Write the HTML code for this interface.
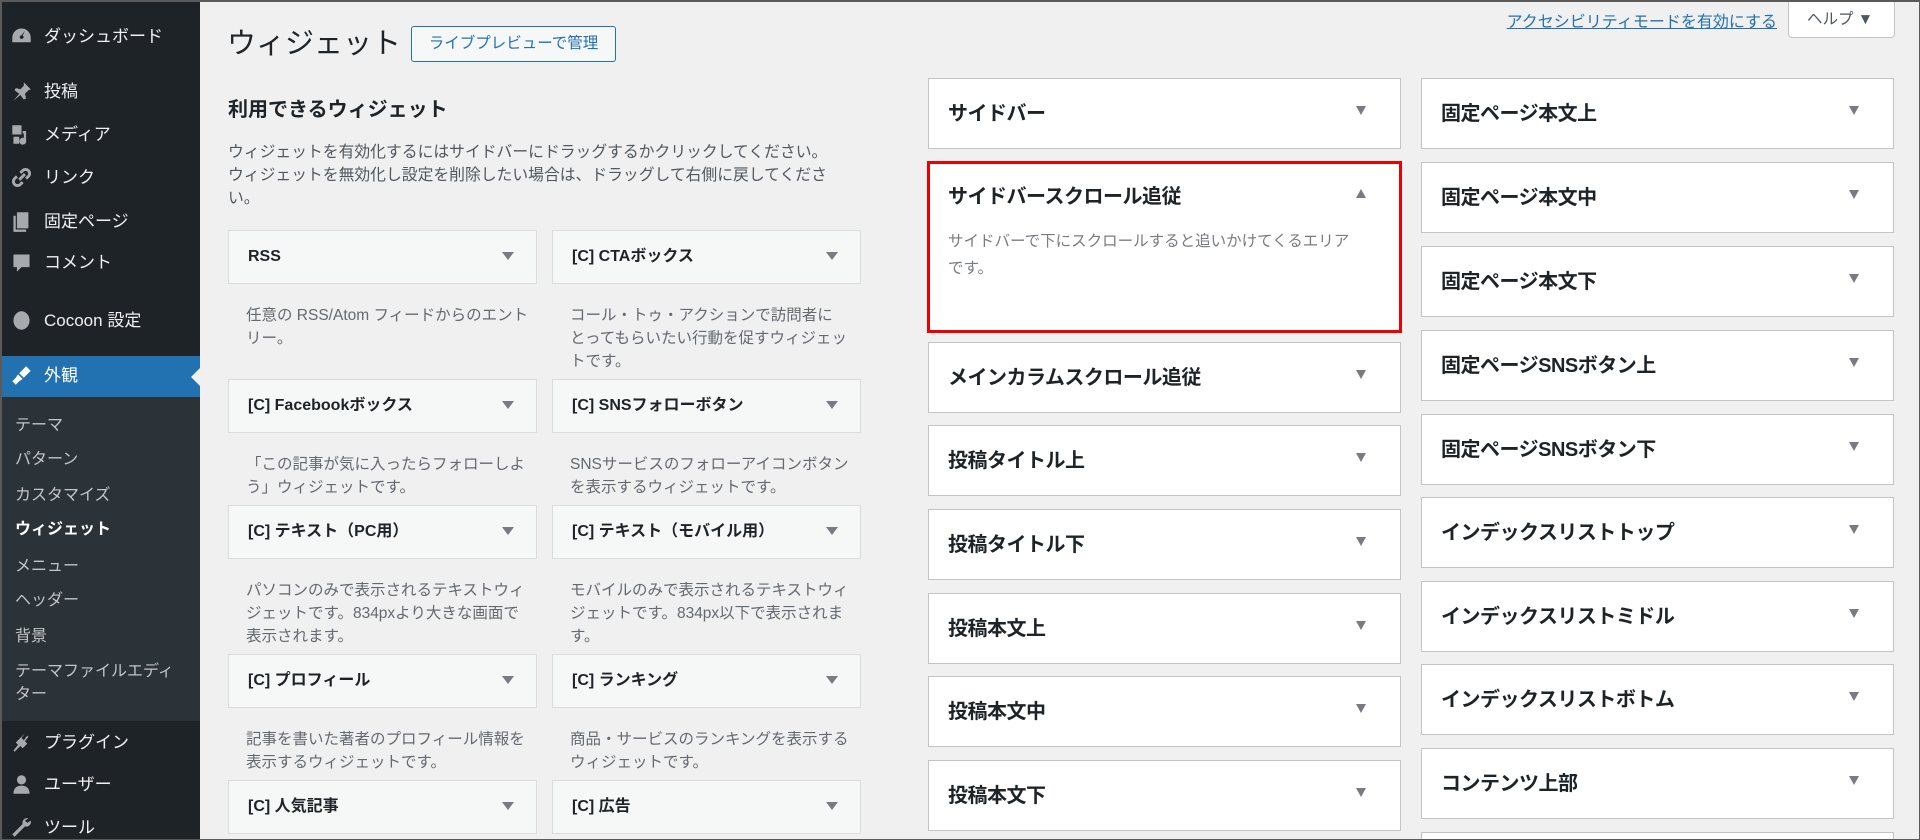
<!DOCTYPE html>
<html style="width:1920px;height:840px;overflow:hidden"><head><meta charset="utf-8"><style>
*{margin:0;padding:0;box-sizing:border-box}
body{width:1920px;height:840px;overflow:hidden;background:#f0f0f1;font-family:"Liberation Sans","Noto Sans CJK JP",sans-serif;position:relative;color:#1d2327}
.frame{position:absolute;left:0;top:0;width:1920px;height:840px;border:2px solid #5a5a5a;border-right-width:1px;border-bottom-width:1px;pointer-events:none;z-index:10}
#side{position:absolute;left:0;top:0;width:200px;height:840px;background:#1d2327}
#sub{position:absolute;left:0;top:397px;width:200px;height:324px;background:#2c3338}
#act{position:absolute;left:0;top:356px;width:200px;height:41px;background:#2271b1}
#act:after{content:"";position:absolute;right:0;top:12px;border:9px solid transparent;border-right-color:#f0f0f1}
.mi{position:absolute;left:44px;font-size:17px;color:#f0f0f1;line-height:20px}
.ic{position:absolute;left:10px;width:23px;height:23px;color:#a7aaad;margin-top:-2px}
.si{position:absolute;left:15px;font-size:16px;color:#c3c4c7;line-height:22px}
.abs{position:absolute}
.wc{position:absolute;width:309px;height:54px;background:#f6f7f7;border:1px solid #dcdcde}
.wc b{position:absolute;left:19px;top:17px;font-size:16px;line-height:18px;height:18px;font-weight:bold;color:#1d2327;white-space:nowrap}
.wc i{position:absolute;right:22px;top:21px;border:6px solid transparent;border-top:8px solid #787c82;border-bottom:0}
.wd{position:absolute;white-space:nowrap;font-size:15.5px;line-height:23px;color:#646970}
.sc{position:absolute;width:473px;height:71px;background:#fff;border:1px solid #c3c4c7;overflow:hidden}
.sc b{position:absolute;left:19px;top:24px;font-size:20px;line-height:22px;font-weight:bold;color:#1d2327;letter-spacing:-0.5px;white-space:nowrap}
.sc i{position:absolute;right:34px;top:27px;border:5px solid transparent;border-top:9px solid #787c82;border-bottom:0}
</style></head><body>
<div id="side"></div><div id="sub"></div><div id="act"></div>
<svg class="ic" style="top:27px" viewBox="0 0 20 20"><path fill="currentColor" d="M10 3a8 8 0 0 0-8 8v4h16v-4a8 8 0 0 0-8-8zm0 9a1.5 1.5 0 1 1 0-3l3-4-2 4.2a1.5 1.5 0 0 1-1 2.8z"/></svg>
<div class="mi" style="top:27px">ダッシュボード</div>
<svg class="ic" style="top:82px" viewBox="0 0 20 20"><path fill="currentColor" d="M12 2l6 6-2 1-3 3 1 4-2 1-3-4-6 5 5-6-4-3 1-2 4 1 3-3z"/></svg>
<div class="mi" style="top:82px">投稿</div>
<svg class="ic" style="top:125px" viewBox="0 0 20 20"><path fill="currentColor" d="M2 2h8v8H2zM11 7h3v8a3 3 0 1 1-2-2V9h-1zM3 12h5v6H3z"/></svg>
<div class="mi" style="top:125px">メディア</div>
<svg class="ic" style="top:168px" viewBox="0 0 20 20"><path fill="none" stroke="currentColor" stroke-width="2.5" d="M8 12l5-5M6 9l-2 2a3 3 0 0 0 5 5l2-2M14 11l2-2a3 3 0 0 0-5-5l-2 2"/></svg>
<div class="mi" style="top:168px">リンク</div>
<svg class="ic" style="top:212px" viewBox="0 0 20 20"><path fill="currentColor" d="M6 2h10v14H6zM3 5h2v12h9v2H3z"/></svg>
<div class="mi" style="top:212px">固定ページ</div>
<svg class="ic" style="top:253px" viewBox="0 0 20 20"><path fill="currentColor" d="M3 3h14v11h-7l-4 4v-4H3z"/></svg>
<div class="mi" style="top:253px">コメント</div>
<svg class="ic" style="top:311px" viewBox="0 0 20 20"><ellipse cx="10" cy="10" rx="7" ry="8" fill="currentColor"/></svg>
<div class="mi" style="top:311px">Cocoon 設定</div>
<svg class="ic" style="top:366px;color:#fff" viewBox="0 0 20 20"><path fill="currentColor" d="M14 2l4 4-6 6-4-4zM7 9l4 4-3 2-3 3-3-3 3-3z"/></svg>
<div class="mi" style="top:366px;color:#fff">外観</div>
<div class="si" style="top:415px">テーマ</div>
<div class="si" style="top:449px">パターン</div>
<div class="si" style="top:485px">カスタマイズ</div>
<div class="si" style="top:519px;color:#fff;font-weight:bold">ウィジェット</div>
<div class="si" style="top:556px">メニュー</div>
<div class="si" style="top:590px">ヘッダー</div>
<div class="si" style="top:626px">背景</div>
<div class="si" style="top:660px;width:170px;line-height:23px">テーマファイルエディター</div>
<svg class="ic" style="top:733px" viewBox="0 0 20 20"><path fill="currentColor" d="M13 2l-3 4 2 2 3-4 1 1-3 4 2 2-4 4-2-2-5 5-1-1 4-5-2-2z"/></svg>
<div class="mi" style="top:733px">プラグイン</div>
<svg class="ic" style="top:775px" viewBox="0 0 20 20"><circle cx="10" cy="6" r="4" fill="currentColor"/><path fill="currentColor" d="M3 18c0-5 3-7 7-7s7 2 7 7z"/></svg>
<div class="mi" style="top:775px">ユーザー</div>
<svg class="ic" style="top:818px" viewBox="0 0 20 20"><path fill="currentColor" d="M16 2a4 4 0 0 0-5 5L2 16l2 2 9-9a4 4 0 0 0 5-5l-3 2-2-2z"/></svg>
<div class="mi" style="top:818px">ツール</div>

<div class="abs" style="left:227px;top:25px;font-size:29px;color:#1d2327;line-height:38px">ウィジェット</div>
<div class="abs" style="left:411px;top:26px;width:205px;height:36px;border:1px solid #2271b1;border-radius:3px;color:#2271b1;font-size:15.5px;line-height:34px;text-align:center;background:#f6f7f7">ライブプレビューで管理</div>
<div class="abs" style="left:1777px;top:8px;transform:translateX(-100%);white-space:nowrap;font-size:16px;color:#2271b1;text-decoration:underline">アクセシビリティモードを有効にする</div>
<div class="abs" style="left:1788px;top:0;width:107px;height:38px;background:#fff;border:1px solid #c3c4c7;border-top:0;border-radius:0 0 4px 4px;font-size:15.5px;line-height:40px;padding-left:18px;color:#50575e">ヘルプ ▼</div>

<div class="abs" style="left:228px;top:97px;font-size:20px;font-weight:bold;line-height:26px">利用できるウィジェット</div>
<div class="abs" style="left:228px;top:141px;width:606px;font-size:15.8px;line-height:23px;color:#50575e">ウィジェットを有効化するにはサイドバーにドラッグするかクリックしてください。ウィジェットを無効化し設定を削除したい場合は、ドラッグして右側に戻してください。</div>

<div class="wc" style="left:228px;top:230px"><b>RSS</b><i></i></div>
<div class="wc" style="left:552px;top:230px"><b>[C] CTAボックス</b><i></i></div>
<div class="wd" style="left:246px;top:304px">任意の RSS/Atom フィードからのエント<br>リー。</div>
<div class="wd" style="left:570px;top:304px">コール・トゥ・アクションで訪問者に<br>とってもらいたい行動を促すウィジェッ<br>トです。</div>
<div class="wc" style="left:228px;top:379px"><b>[C] Facebookボックス</b><i></i></div>
<div class="wc" style="left:552px;top:379px"><b>[C] SNSフォローボタン</b><i></i></div>
<div class="wd" style="left:246px;top:453px">「この記事が気に入ったらフォローしよ<br>う」ウィジェットです。</div>
<div class="wd" style="left:570px;top:453px">SNSサービスのフォローアイコンボタン<br>を表示するウィジェットです。</div>
<div class="wc" style="left:228px;top:505px"><b>[C] テキスト（PC用）</b><i></i></div>
<div class="wc" style="left:552px;top:505px"><b>[C] テキスト（モバイル用）</b><i></i></div>
<div class="wd" style="left:246px;top:579px">パソコンのみで表示されるテキストウィ<br>ジェットです。834pxより大きな画面で<br>表示されます。</div>
<div class="wd" style="left:570px;top:579px">モバイルのみで表示されるテキストウィ<br>ジェットです。834px以下で表示されま<br>す。</div>
<div class="wc" style="left:228px;top:654px"><b>[C] プロフィール</b><i></i></div>
<div class="wc" style="left:552px;top:654px"><b>[C] ランキング</b><i></i></div>
<div class="wd" style="left:246px;top:728px">記事を書いた著者のプロフィール情報を<br>表示するウィジェットです。</div>
<div class="wd" style="left:570px;top:728px">商品・サービスのランキングを表示する<br>ウィジェットです。</div>
<div class="wc" style="left:228px;top:780px"><b>[C] 人気記事</b><i></i></div>
<div class="wc" style="left:552px;top:780px"><b>[C] 広告</b><i></i></div>

<div class="sc" style="left:928px;top:78px"><b>サイドバー</b><i></i></div>
<div class="sc" style="left:927px;top:161px;width:475px;height:172px;border:3px solid #e00"><b style="left:18px;top:22px">サイドバースクロール追従</b><i style="border-top:0;border-bottom:9px solid #787c82;top:25px;right:33px"></i>
<div class="abs" style="left:18px;top:64px;width:412px;font-size:15.5px;line-height:27px;color:#787c82">サイドバーで下にスクロールすると追いかけてくるエリアです。</div></div>
<div class="sc" style="left:928px;top:342px"><b>メインカラムスクロール追従</b><i></i></div>
<div class="sc" style="left:928px;top:425px"><b>投稿タイトル上</b><i></i></div>
<div class="sc" style="left:928px;top:509px"><b>投稿タイトル下</b><i></i></div>
<div class="sc" style="left:928px;top:593px"><b>投稿本文上</b><i></i></div>
<div class="sc" style="left:928px;top:676px"><b>投稿本文中</b><i></i></div>
<div class="sc" style="left:928px;top:760px"><b>投稿本文下</b><i></i></div>

<div class="sc" style="left:1421px;top:78px"><b>固定ページ本文上</b><i></i></div>
<div class="sc" style="left:1421px;top:162px"><b>固定ページ本文中</b><i></i></div>
<div class="sc" style="left:1421px;top:246px"><b>固定ページ本文下</b><i></i></div>
<div class="sc" style="left:1421px;top:330px"><b>固定ページSNSボタン上</b><i></i></div>
<div class="sc" style="left:1421px;top:414px"><b>固定ページSNSボタン下</b><i></i></div>
<div class="sc" style="left:1421px;top:497px"><b>インデックスリストトップ</b><i></i></div>
<div class="sc" style="left:1421px;top:581px"><b>インデックスリストミドル</b><i></i></div>
<div class="sc" style="left:1421px;top:664px"><b>インデックスリストボトム</b><i></i></div>
<div class="sc" style="left:1421px;top:748px"><b>コンテンツ上部</b><i></i></div>
<div class="sc" style="left:1421px;top:832px;height:8px;border-bottom:0"></div>
<div class="frame"></div>
</body></html>
